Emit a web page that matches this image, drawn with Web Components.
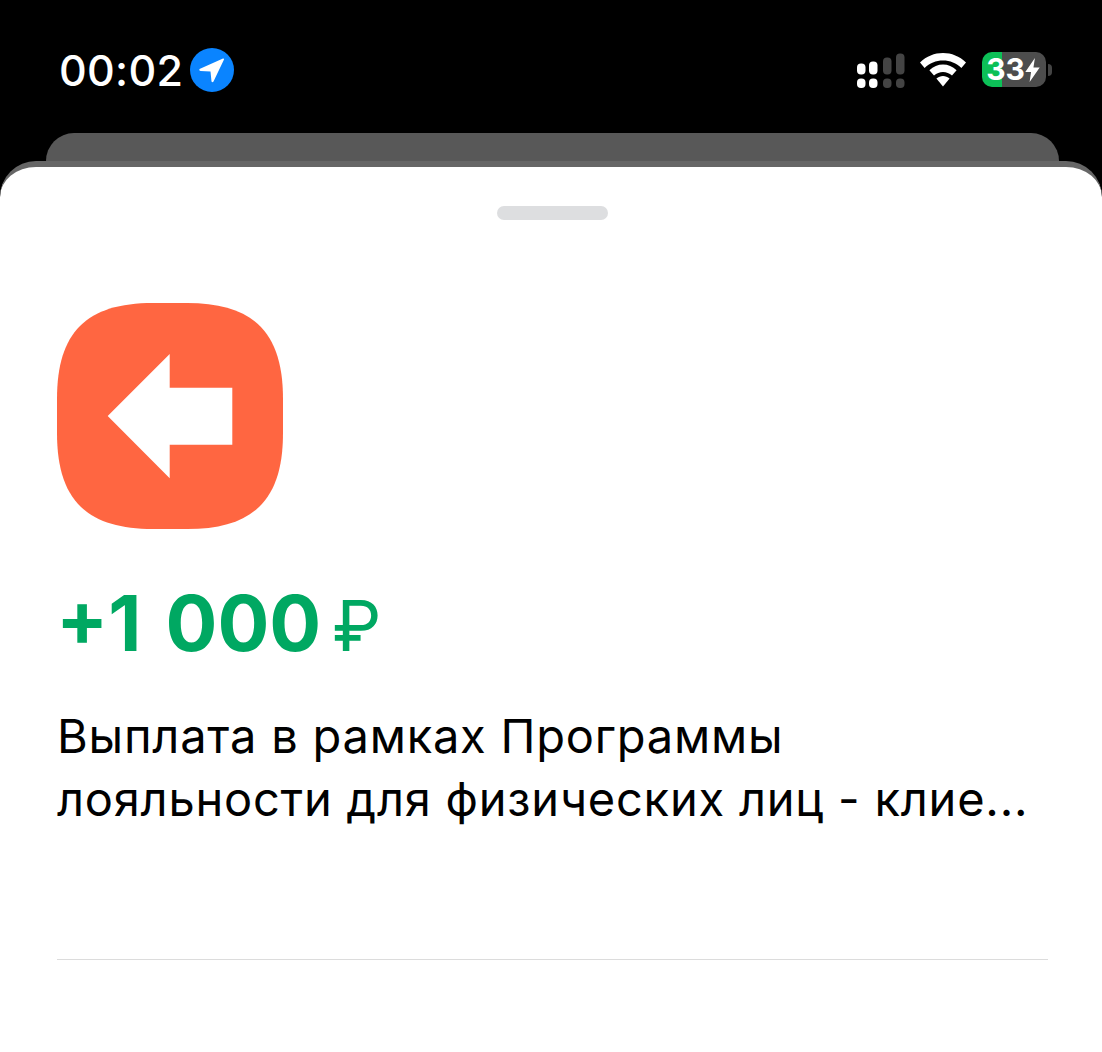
<!DOCTYPE html>
<html>
<head>
<meta charset="utf-8">
<style>
    html, body { margin: 0; padding: 0; background: #000; }
</style>
</head>
<body>
<phone-screen>
    <status-bar time="00:02"></status-bar>
    <sheet-stack>
        <txn-icon></txn-icon>
        <txn-amount value="+1 000" currency="₽"></txn-amount>
        <txn-title>Выплата в рамках Программы лояльности для физических лиц - клие...</txn-title>
        <hr-line></hr-line>
    </sheet-stack>
</phone-screen>

<script>
// base class, every element just sets its markup in an open shadow root
class BaseElement extends HTMLElement {
    constructor() {
        super();
        this.attachShadow({ mode: 'open' });
    }

    connectedCallback() {
        this.render();
    }
}

// whole screen, black behind the sheet
class PhoneScreen extends BaseElement {
    render() {
        this.shadowRoot.innerHTML = `
            <style>
                :host {
                    display: flex;
                    flex-direction: column;
                    width: 1102px;
                    height: 1052px;
                    overflow: hidden;
                    background: #000;
                    font-family: Inter, "Liberation Sans", sans-serif;
                }
            </style>
            <slot></slot>
        `;
    }
}

// top bar with time, location, signal, wifi and battery
class StatusBar extends BaseElement {
    render() {
        const time = this.getAttribute('time') || '';
        this.shadowRoot.innerHTML = `
            <style>
                :host {
                    display: flex;
                    align-items: center;
                    box-sizing: border-box;
                    height: 133px;
                    padding: 6px 50px 0 59px;
                    color: #fff;
                }
                .time {
                    font-size: 43px;
                    font-weight: 550;
                    line-height: 50px;
                    letter-spacing: 0.3px;
                }
                .location { display: block; margin-left: 7px; }
                .right {
                    display: flex;
                    align-items: center;
                    gap: 15px;
                    margin-left: auto;
                }
                svg { display: block; }
            </style>
            <span class="time">${time}</span>
            <svg class="location" width="44" height="44" viewBox="0 0 44 44">
                <circle cx="22" cy="22" r="22" fill="#0a84ff"/>
                <path d="M33 10.5 L9.5 21 Q8.5 22.5 10.5 23 L20.5 23.5 L21.5 33.5 Q22.5 35 23.5 33.5 L34 11.5 Q34 10 33 10.5Z" fill="#fff"/>
            </svg>
            <div class="right">
                <svg width="48" height="36" viewBox="1 -0.5 48 36">
                    <rect x="1" y="11" width="8.5" height="11" rx="4" fill="#fff"/>
                    <rect x="13" y="9" width="8.5" height="13" rx="4" fill="#fff"/>
                    <rect x="27" y="5" width="8.5" height="17" rx="4" fill="#444"/>
                    <rect x="40" y="1" width="8.5" height="21" rx="4" fill="#444"/>
                    <rect x="1" y="26" width="8.5" height="9.5" rx="4" fill="#fff"/>
                    <rect x="13" y="26" width="8.5" height="9.5" rx="4" fill="#fff"/>
                    <rect x="27" y="26" width="8.5" height="9.5" rx="4" fill="#444"/>
                    <rect x="40" y="26" width="8.5" height="9.5" rx="4" fill="#444"/>
                </svg>
                <svg width="46" height="34" viewBox="0 0 46 34">
                    <path d="M23 0 C31.5 0 39.5 3.2 46 9.5 L41.4 15 C36.5 10.2 30 7.6 23 7.6 C16 7.6 9.5 10.2 4.6 15 L0 9.5 C6.5 3.2 14.5 0 23 0Z" fill="#fff"/>
                    <path d="M23 11.5 C28 11.5 32.6 13.4 36.6 17.2 L32 22.4 C29.4 20.1 26.3 18.9 23 18.9 C19.7 18.9 16.6 20.1 14 22.4 L9.4 17.2 C13.4 13.4 18 11.5 23 11.5Z" fill="#fff"/>
                    <path d="M23 23 C25.4 23 27.6 23.9 29.6 25.6 L23 33.5 L16.4 25.6 C18.4 23.9 20.6 23 23 23Z" fill="#fff"/>
                </svg>
                <battery-pill level="33"></battery-pill>
            </div>
        `;
    }
}

// battery with percent inside, fill is the green part on the left
class BatteryPill extends BaseElement {
    render() {
        const level = this.getAttribute('level') || '0';
        this.shadowRoot.innerHTML = `
            <style>
                :host { display: flex; align-items: center; gap: 2px; margin-left: 1px; }
                .body {
                    display: flex;
                    align-items: center;
                    justify-content: center;
                    box-sizing: border-box;
                    width: 64px;
                    height: 35px;
                    padding-right: 2px;
                    border-radius: 10px;
                    background: linear-gradient(to right, #0cc057 0, #0cc057 20px, #4d4d4d 20px);
                    color: #fff;
                    font-size: 30px;
                    font-weight: 700;
                    line-height: 35px;
                }
                .cap { width: 4px; height: 12px; background: #444; border-radius: 0 6px 6px 0; }
                svg { display: block; }
            </style>
            <div class="body">
                <span>${level}</span>
                <svg width="15" height="24" viewBox="0 0 15 25">
                    <path d="M10 0 L0 14.5 H6 L4.5 25 L15 10 H8.5Z" fill="#fff"/>
                </svg>
            </div>
            <div class="cap"></div>
        `;
    }
}

// back card peeking out and the white sheet in front of it
class SheetStack extends BaseElement {
    render() {
        this.shadowRoot.innerHTML = `
            <style>
                :host {
                    display: flex;
                    flex-direction: column;
                    flex: 1;
                    min-height: 0;
                }
                .back {
                    flex: none;
                    height: 28px;
                    margin: 0 43px 0 46px;
                    border-radius: 28px 28px 0 0;
                    background: #585858;
                }
                .sheet {
                    flex: 1;
                    box-sizing: border-box;
                    padding: 0 54px 0 57px;
                    border-top: 6px solid #666;
                    border-radius: 36px 36px 0 0;
                    background: #fff;
                }
                .grabber {
                    width: 111px;
                    height: 14px;
                    margin: 39px auto 83px;
                    border-radius: 7px;
                    background: #dddee0;
                }
            </style>
            <div class="back"></div>
            <div class="sheet">
                <div class="grabber"></div>
                <slot></slot>
            </div>
        `;
    }
}

// orange squircle with the arrow
class TxnIcon extends BaseElement {
    render() {
        this.shadowRoot.innerHTML = `
            <style>
                :host { display: block; width: 226px; height: 226px; }
                svg { display: block; }
            </style>
            <svg width="226" height="226" viewBox="0 0 226 226">
                <path d="M96 0 H130 C196.7 0 226 29.3 226 96 V130 C226 196.7 196.7 226 130 226 H96 C29.3 226 0 196.7 0 130 V96 C0 29.3 29.3 0 96 0Z" fill="#ff6641"/>
                <path d="M50.7 113 L112.7 51 V84.7 H175.3 V141.7 H112.7 V175.3Z" fill="#fff"/>
            </svg>
        `;
    }
}

// green sum, the currency sign is lighter than the digits
class TxnAmount extends BaseElement {
    render() {
        const value = this.getAttribute('value') || '';
        const currency = this.getAttribute('currency') || '';
        const [sign, rest] = [value.slice(0, 2), value.slice(3)];
        this.shadowRoot.innerHTML = `
            <style>
                :host {
                    display: flex;
                    align-items: baseline;
                    margin-top: 44px;
                    height: 100px;
                    margin-left: -3px;
                    padding-left: 2px;
                    color: #00a862;
                    font-size: 77px;
                    font-weight: 700;
                    line-height: 100px;
                    white-space: nowrap;
                }
                .gap { width: 24px; }
                .currency { margin-left: 11px; font-size: 70px; font-weight: 400; }
            </style>
            <span>${sign}</span><span class="gap"></span><span>${rest}</span>
            <span class="currency">${currency}</span>
        `;
    }
}

// two line description
class TxnTitle extends BaseElement {
    render() {
        this.shadowRoot.innerHTML = `
            <style>
                :host {
                    display: block;
                    margin-top: 31px;
                    color: #000;
                    font-size: 47px;
                    font-weight: 400;
                    line-height: 63px;
                    letter-spacing: 0.78px;
                }
            </style>
            <slot></slot>
        `;
    }
}

// thin divider under the description
class HrLine extends BaseElement {
    render() {
        this.shadowRoot.innerHTML = `
            <style>
                :host {
                    display: block;
                    height: 1px;
                    margin-top: 129px;
                    background: #dcdcdc;
                }
            </style>
        `;
    }
}

// register the custom elements
customElements.define('phone-screen', PhoneScreen);
customElements.define('status-bar', StatusBar);
customElements.define('battery-pill', BatteryPill);
customElements.define('sheet-stack', SheetStack);
customElements.define('txn-icon', TxnIcon);
customElements.define('txn-amount', TxnAmount);
customElements.define('txn-title', TxnTitle);
customElements.define('hr-line', HrLine);
</script>
</body>
</html>
